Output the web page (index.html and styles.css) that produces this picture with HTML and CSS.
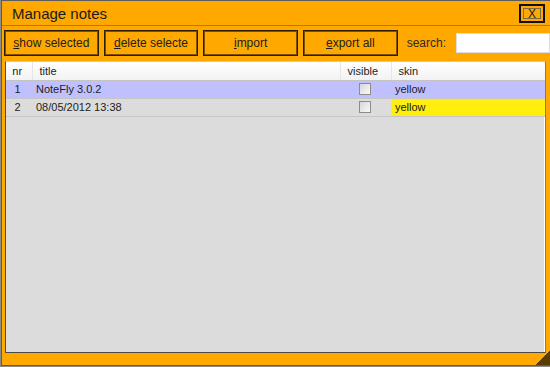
FILE: index.html
```html
<!DOCTYPE html>
<html lang="en">

<head>
    <meta charset="UTF-8">
    <title>Manage notes</title>
    <link rel="stylesheet" href="styles.css">
</head>

<body>
    <div class="window">
        <div class="titlebar">
            <span class="title">Manage notes</span>
            <span class="close"><span class="close-inner">X</span></span>
        </div>

        <div class="toolbar">
            <button class="btn"><u>s</u>how selected</button>
            <button class="btn"><u>d</u>elete selecte</button>
            <button class="btn"><u>i</u>mport</button>
            <button class="btn"><u>e</u>xport all</button>
            <label class="search">search:</label>
            <input class="search-box" type="text">
        </div>

        <div class="grid">
            <table>
                <colgroup>
                    <col class="c-nr">
                    <col class="c-title">
                    <col class="c-visible">
                    <col class="c-skin">
                </colgroup>
                <thead>
                    <tr>
                        <th class="nr">nr</th>
                        <th>title</th>
                        <th>visible</th>
                        <th>skin</th>
                    </tr>
                </thead>
                <tbody>
                    <tr class="selected">
                        <td class="nr">1</td>
                        <td>NoteFly 3.0.2</td>
                        <td class="check"><span class="box"></span></td>
                        <td>yellow</td>
                    </tr>
                    <tr>
                        <td class="nr">2</td>
                        <td>08/05/2012 13:38</td>
                        <td class="check"><span class="box"></span></td>
                        <td class="skin-yellow">yellow</td>
                    </tr>
                </tbody>
            </table>
        </div>

        <div class="grip"></div>
    </div>
</body>

</html>
```

FILE: styles.css
```css
* {
    margin: 0;
    padding: 0;
    box-sizing: border-box;
}

body {
    width: 550px;
    height: 367px;
    overflow: hidden;
    background: #8c8c8c;
    font-family: "Liberation Sans", Arial, sans-serif;
    color: #1c1c1c;
}

/* window frame */
.window {
    position: relative;
    display: flex;
    flex-direction: column;
    margin-left: 1px;
    width: 549px;
    height: 366px;
    background: #ffa800;
    border: 1px solid #5c5c5c;
    border-right: none;
}

.titlebar {
    display: flex;
    align-items: center;
    justify-content: space-between;
    height: 25px;
    padding: 0 5px 0 10px;
    border-bottom: 1px solid #9c7c3c;
}

.title {
    font-size: 15px;
    color: #1a1a1a;
    padding-top: 1px;
}

.close {
    display: flex;
    width: 26px;
    height: 19px;
    padding: 2px;
    border: 2px solid #111;
}

.close-inner {
    flex: 1;
    border: 1px solid #7a6a4a;
    font-size: 12px;
    line-height: 10px;
    text-align: center;
    color: #222;
}

/* buttons row */
.toolbar {
    display: flex;
    align-items: center;
    gap: 5px;
    padding: 4px 0 0 2px;
    height: 30px;
}

.btn {
    width: 95px;
    height: 26px;
    background: #ffa800;
    border: 1px solid #2a1c00;
    box-shadow: inset 1px 1px 0 #7a5200, inset -1px -1px 0 #7a5200;
    font-family: inherit;
    font-size: 12px;
    color: #1c1c1c;
    white-space: nowrap;
    overflow: hidden;
}

.search {
    margin-left: 4px;
    font-size: 12px;
    color: #2a2a2a;
}

.search-box {
    width: 94px;
    height: 20px;
    margin-left: 5px;
    border: 1px solid #ddd;
    background: #fff;
}

/* notes table */
.grid {
    flex: 1;
    margin: 5px 4px 12px 3px;
    background: #dcdcdc;
    border: 1px solid #4a4a4a;
    border-top-color: #c8c8c8;
    border-right-color: #7c7c7c;
    box-shadow: inset -1px 0 0 #fff;
    overflow: hidden;
}

table {
    width: 539px;
    border-collapse: collapse;
    table-layout: fixed;
    font-size: 11px;
}

.c-nr { width: 26px; }
.c-title { width: 308px; }
.c-visible { width: 51px; }
.c-skin { width: 154px; }

th {
    height: 18px;
    padding-left: 7px;
    text-align: left;
    font-weight: normal;
    color: #222;
    background: linear-gradient(#ffffff, #f2f2f2);
    border-left: 1px solid #e6e6e6;
    border-bottom: 1px solid #c4c4c4;
}

th:first-child {
    border-left: none;
}

td {
    height: 18px;
    padding-left: 4px;
    border-bottom: 1px solid #c6c6c6;
    white-space: nowrap;
}

.nr {
    text-align: center;
    padding: 0 3px 0 0;
}

tr.selected td {
    background: #c0c0ff;
}

.skin-yellow {
    background: #ffee0e;
}

.check {
    padding-left: 19px;
}

.box {
    display: block;
    width: 12px;
    height: 12px;
    border: 1px solid #8c8c8c;
    background: linear-gradient(135deg, #d6d6d6, #fafafa);
}

/* resize grip in the corner */
.grip {
    position: absolute;
    right: 0;
    bottom: 0;
    width: 14px;
    height: 14px;
    background: linear-gradient(135deg, transparent 50%, #5a3c00 50%);
}
```
